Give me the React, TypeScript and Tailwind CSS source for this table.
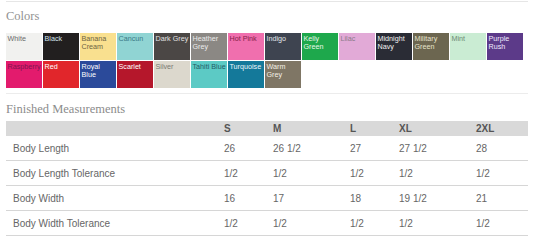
const swatches = [
  { name: ["White"], bg: "bg-[#f1f1ef]", fg: "text-[#6a6a6a]" },
  { name: ["Black"], bg: "bg-[#221f1f]", fg: "text-[#d4e4ef]" },
  { name: ["Banana", "Cream"], bg: "bg-[#f9e08f]", fg: "text-[#6e6444]" },
  { name: ["Cancun"], bg: "bg-[#90d4d3]", fg: "text-[#3a7a86]" },
  { name: ["Dark Grey"], bg: "bg-[#4b4745]", fg: "text-[#e2e2e2]" },
  { name: ["Heather", "Grey"], bg: "bg-[#8b8884]", fg: "text-[#ececec]" },
  { name: ["Hot Pink"], bg: "bg-[#f06fae]", fg: "text-[#852048]" },
  { name: ["Indigo"], bg: "bg-[#3e4450]", fg: "text-[#e2e4ea]" },
  { name: ["Kelly", "Green"], bg: "bg-[#1ea84c]", fg: "text-[#eaf7ea]" },
  { name: ["Lilac"], bg: "bg-[#e2aad7]", fg: "text-[#8a7a88]" },
  { name: ["Midnight", "Navy"], bg: "bg-[#2a2c35]", fg: "text-[#f2f2f2]" },
  { name: ["Military", "Green"], bg: "bg-[#6c6650]", fg: "text-[#e6e4cc]" },
  { name: ["Mint"], bg: "bg-[#caecd3]", fg: "text-[#6c8a72]" },
  { name: ["Purple", "Rush"], bg: "bg-[#5c3a89]", fg: "text-[#f1eaff]" },
  { name: ["Raspberry"], bg: "bg-[#e31b6d]", fg: "text-[#7e1450]" },
  { name: ["Red"], bg: "bg-[#e1262b]", fg: "text-[#ffffff]" },
  { name: ["Royal", "Blue"], bg: "bg-[#2b4a9a]", fg: "text-[#ffffff]" },
  { name: ["Scarlet"], bg: "bg-[#b5172b]", fg: "text-[#ffffff]" },
  { name: ["Silver"], bg: "bg-[#dcd8cd]", fg: "text-[#7a7a74]" },
  { name: ["Tahiti Blue"], bg: "bg-[#5ccac5]", fg: "text-[#1f5c66]" },
  { name: ["Turquoise"], bg: "bg-[#14799a]", fg: "text-[#eaf6fb]" },
  { name: ["Warm", "Grey"], bg: "bg-[#7f7665]", fg: "text-[#f4f0e6]" },
];

const sizes = ["S", "M", "L", "XL", "2XL"];

const rows = [
  { label: "Body Length", values: ["26", "26 1/2", "27", "27 1/2", "28"] },
  { label: "Body Length Tolerance", values: ["1/2", "1/2", "1/2", "1/2", "1/2"] },
  { label: "Body Width", values: ["16", "17", "18", "19 1/2", "21"] },
  { label: "Body Width Tolerance", values: ["1/2", "1/2", "1/2", "1/2", "1/2"] },
];

const gridCols = "grid grid-cols-[211px_49px_77px_49px_77px_1fr]";

export default function App() {
  return (
    <div className="w-[533px] h-[240px] overflow-hidden bg-white px-[6px] pr-[5px]">
      {/* top rule */}
      <div className="mt-[1px] h-px bg-[#e6e6e6]" />

      <h2 className="mt-[7px] text-[12.5px] leading-[14px] text-[#929292] font-['Liberation_Serif',serif]">
        Colors
      </h2>

      {/* swatches */}
      <div className="mt-[10px] grid grid-cols-[repeat(14,36px)] gap-px">
        {swatches.map((s) => (
          <div
            key={s.name.join(" ")}
            className={`h-[27px] px-[1.5px] pt-[2px] ${s.bg} ${s.fg} text-[7.2px] leading-[8px] font-['Liberation_Sans',sans-serif] overflow-hidden`}
          >
            {s.name.map((line) => (
              <div key={line} className="whitespace-nowrap">
                {line}
              </div>
            ))}
          </div>
        ))}
      </div>

      <div className="mt-[5px] h-px bg-[#ececec]" />

      <h2 className="mt-[8px] text-[12.5px] leading-[14px] text-[#8c8c8c] font-['Liberation_Serif',serif]">
        Finished Measurements
      </h2>

      {/* measurements table */}
      <div className="mt-[5px] w-[522px] font-['Liberation_Sans',sans-serif] text-[10px]">
        <div className={`${gridCols} h-[15px] items-center bg-[#d9d9d9] font-bold text-[#555555]`}>
          <div />
          {sizes.map((s) => (
            <div key={s} className="pl-[7px]">
              {s}
            </div>
          ))}
        </div>
        {rows.map((r) => (
          <div
            key={r.label}
            className={`${gridCols} h-[25px] items-center border-b border-[#d6d6d6] text-[#666666]`}
          >
            <div className="pl-[7px]">{r.label}</div>
            {r.values.map((v, i) => (
              <div key={i} className="pl-[7px]">
                {v}
              </div>
            ))}
          </div>
        ))}
      </div>
    </div>
  );
}
